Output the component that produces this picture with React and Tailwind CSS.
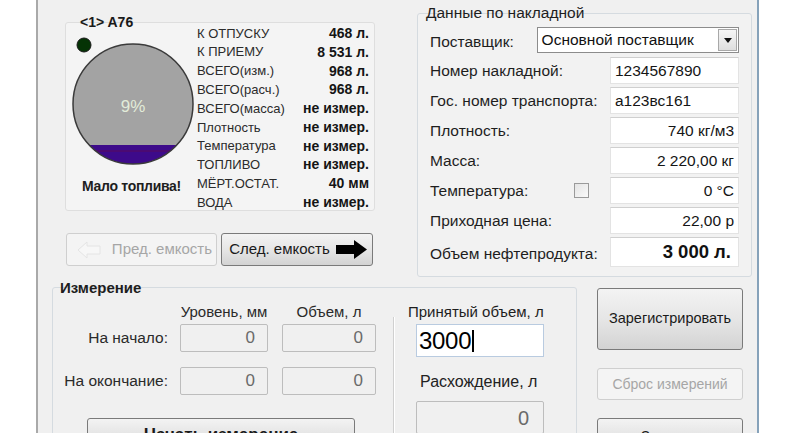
import React from 'react';

const font = { fontFamily: '"Liberation Sans", Arial, sans-serif' };

const tankRows = [
    ['К ОТПУСКУ', '468 л.'],
    ['К ПРИЕМУ', '8 531 л.'],
    ['ВСЕГО(изм.)', '968 л.'],
    ['ВСЕГО(расч.)', '968 л.'],
    ['ВСЕГО(масса)', 'не измер.'],
    ['Плотность', 'не измер.'],
    ['Температура', 'не измер.'],
    ['ТОПЛИВО', 'не измер.'],
    ['МЁРТ.ОСТАТ.', '40 мм'],
    ['ВОДА', 'не измер.'],
];

const invoiceRows = [
    { label: 'Номер накладной:', value: '1234567890', left: true },
    { label: 'Гос. номер транспорта:', value: 'а123вс161', left: true },
    { label: 'Плотность:', value: '740 кг/м3' },
    { label: 'Масса:', value: '2 220,00 кг' },
    { label: 'Температура:', value: '0 °C', check: true },
    { label: 'Приходная цена:', value: '22,00 р' },
];

function TankGauge() {
    return (
        <svg width="131" height="142" viewBox="0 0 131 142">
            <defs>
                <clipPath id="tankClip">
                    <circle cx="67" cy="81" r="60" />
                </clipPath>
            </defs>
            <circle cx="18" cy="22" r="7" fill="#053305" stroke="#1a1a1a" strokeWidth="1" />
            <circle cx="67" cy="81" r="60" fill="#a3a3a3" />
            <g clipPath="url(#tankClip)">
                <rect x="0" y="122" width="131" height="22" fill="#3d0a8a" />
                <line x1="0" y1="128" x2="131" y2="128" stroke="#5a0a5a" strokeWidth="1" />
            </g>
            <circle cx="67" cy="81" r="60" fill="none" stroke="#3a3a3a" strokeWidth="1.5" />
            <text x="67" y="89" textAnchor="middle" fontSize="17" fill="#e2ecd9" fontFamily="Liberation Sans, Arial, sans-serif">9%</text>
        </svg>
    );
}

function WinButton({ children, className = '', disabled }) {
    if (disabled) {
        return (
            <div className={`flex items-center justify-center rounded-[3px] border border-[#cfcfcf] bg-[#f4f4f4] text-[#a6a6a6] ${className}`}>
                {children}
            </div>
        );
    }
    return (
        <div className={`flex items-center justify-center rounded-[3px] border border-[#7a7a7a] bg-gradient-to-b from-[#f3f3f3] via-[#e6e6e6] to-[#d3d3d3] text-[#1a1a1a] ${className}`}>
            {children}
        </div>
    );
}

export default function App() {
    return (
        <div className="w-[800px] h-[433px] bg-white overflow-hidden flex" style={font}>
            <div className="w-[36px] shrink-0 bg-white"></div>
            <div className="w-[723px] h-[433px] shrink-0 bg-[#f0f0f0] border-l-2 border-l-[#a9a9a9] border-r-2 border-r-[#86a2ba] flex flex-col overflow-hidden">
                {/* top part */}
                <div className="flex h-[287px] shrink-0">
                    <div className="w-[379px] shrink-0 pl-[27px] pt-[22px] flex flex-col">
                        <div className="relative w-[310px] h-[189px] rounded-[3px] border border-[#dedede] bg-[#f4f4f4] flex">
                            <div className="absolute -top-[9px] left-[14px] text-[14px] font-bold text-[#1a1a1a] leading-[16px]">&lt;1&gt; A76</div>
                            <div className="w-[131px] shrink-0 flex flex-col">
                                <TankGauge />
                                <div className="mt-[13px] text-center text-[14px] font-bold text-[#1e1e1e] leading-[16px] tracking-[-0.3px]">Мало топлива!</div>
                            </div>
                            <div className="flex-1 pr-[5px] pt-[1px] flex flex-col">
                                {tankRows.map(([label, value]) => (
                                    <div key={label} className="h-[18.8px] flex items-center justify-between">
                                        <span className="text-[13px] text-[#2b2b2b]">{label}</span>
                                        <span className="text-[14px] font-bold text-[#151515]">{value}</span>
                                    </div>
                                ))}
                            </div>
                        </div>
                        <div className="mt-[22px] ml-[1px] flex gap-[4px]">
                            <WinButton disabled className="w-[151px] h-[33px] text-[15px] justify-end pr-[4px] gap-[6px]">
                                <svg width="24" height="18" viewBox="0 0 24 18" className="mr-auto ml-[10px]">
                                    <path d="M1 9 L10 1 L10 5 L23 5 L23 13 L10 13 L10 17 Z" fill="#f7f7f7" stroke="#e4e4e4" strokeWidth="1" />
                                </svg>
                                <span>Пред. емкость</span>
                            </WinButton>
                            <WinButton className="w-[152px] h-[33px] text-[15px] gap-[6px] pl-[2px]">
                                <span>След. емкость</span>
                                <svg width="31" height="19" viewBox="0 0 31 19">
                                    <path d="M0 5 L18 5 L18 0 L31 9.5 L18 19 L18 14 L0 14 Z" fill="#000" />
                                </svg>
                            </WinButton>
                        </div>
                    </div>
                    <div className="pt-[13px]">
                        <div className="relative w-[335px] h-[264px] rounded-[3px] border border-[#d5dbe0] bg-[#f2f2f2] px-[12px] pt-[13px] flex flex-col">
                            <div className="absolute -top-[10px] left-[8px] text-[15.5px] text-[#1e1e1e] leading-[18px]">Данные по накладной</div>
                            <div className="h-[26px] flex items-center">
                                <span className="w-[108px] text-[15.5px] text-[#1e1e1e] pt-[3px]">Поставщик:</span>
                                <div className="w-[205px] h-[26px] border border-[#8c8c8c] bg-white flex items-center">
                                    <span className="flex-1 pl-[4px] text-[15.5px] text-[#111]">Основной поставщик</span>
                                    <div className="w-[19px] h-[22px] mr-[1px] border border-[#a8a8a8] bg-gradient-to-b from-[#f6f6f6] to-[#dedede] flex items-center justify-center">
                                        <svg width="8" height="5" viewBox="0 0 8 5"><path d="M0 0 L8 0 L4 5 Z" fill="#111" /></svg>
                                    </div>
                                </div>
                            </div>
                            <div className="mt-[4px] flex flex-col gap-[3px]">
                                {invoiceRows.map((row) => (
                                    <div key={row.label} className="h-[27px] flex items-center">
                                        <span className="flex-1 whitespace-nowrap text-[15.5px] text-[#1e1e1e]">{row.label}</span>
                                        {row.check && (
                                            <div className="mr-[21px] w-[15px] h-[15px] border border-[#9a9a9a] bg-gradient-to-br from-[#e4e4e4] to-[#fafafa]"></div>
                                        )}
                                        <div className={`w-[129px] h-[27px] shrink-0 bg-white border border-[#e3e3e3] border-t-[#cfcfcf] flex items-center px-[4px] text-[15.5px] text-[#151515] ${row.left ? 'justify-start' : 'justify-end'}`}>
                                            {row.value}
                                        </div>
                                    </div>
                                ))}
                                <div className="h-[30px] flex items-center">
                                    <span className="flex-1 whitespace-nowrap text-[15.5px] text-[#1e1e1e] pt-[3px]">Объем нефтепродукта:</span>
                                    <div className="w-[129px] h-[30px] shrink-0 bg-white border border-[#e3e3e3] border-t-[#cfcfcf] flex items-center justify-end px-[7px] text-[18.5px] font-bold text-[#111]">
                                        3 000 л.
                                    </div>
                                </div>
                            </div>
                        </div>
                    </div>
                </div>

                {/* bottom part */}
                <div className="flex flex-1">
                    <div className="relative ml-[14px] w-[525px] h-[160px] rounded-[3px] border border-[#d5dbe0] flex">
                        <div className="absolute -top-[9px] left-[7px] text-[15px] font-bold text-[#1e1e1e] leading-[18px]">Измерение</div>
                        <div className="w-[340px] shrink-0 pt-[13px] flex flex-col">
                            <div className="h-[23px] flex items-center text-[15px] text-[#2a2a2a]">
                                <div className="w-[127px]"></div>
                                <div className="w-[88px] text-center">Уровень, мм</div>
                                <div className="w-[14px]"></div>
                                <div className="w-[94px] text-center">Объем, л</div>
                            </div>
                            <div className="flex flex-col gap-[15px]">
                                {['На начало:', 'На окончание:'].map((label) => (
                                    <div key={label} className="h-[28px] flex items-center">
                                        <div className="w-[115px] text-right text-[15.5px] text-[#2a2a2a]">{label}</div>
                                        <div className="ml-[12px] w-[88px] h-[28px] rounded-[2px] border border-[#bdbdbd] bg-[#f0f0f0] flex items-center justify-end pr-[12px] text-[17px] text-[#6a6a6a]">0</div>
                                        <div className="ml-[14px] w-[94px] h-[28px] rounded-[2px] border border-[#bdbdbd] bg-[#f0f0f0] flex items-center justify-end pr-[12px] text-[17px] text-[#6a6a6a]">0</div>
                                    </div>
                                ))}
                            </div>
                            <WinButton className="mt-[23px] ml-[34px] w-[268px] h-[32px] items-start pt-[3px] text-[17px] font-bold">
                                Начать измерение
                            </WinButton>
                        </div>
                        <div className="mt-[29px] w-[2px] border-l border-l-[#d0d0d0] border-r border-r-white"></div>
                        <div className="flex-1 pt-[13px] flex flex-col">
                            <div className="h-[23px] flex items-center pl-[13px] text-[15px] text-[#1e1e1e]">Принятый объем, л</div>
                            <div className="ml-[21px] w-[128px] h-[33px] bg-white border border-[#b9cbe0] flex items-center pl-[2px]">
                                <span className="text-[24px] text-black tracking-[-0.3px]">3000</span>
                                <div className="ml-[1px] w-[2px] h-[22px] bg-black"></div>
                            </div>
                            <div className="mt-[14px] h-[22px] flex items-center pl-[25px] text-[16px] text-[#222]">Расхождение, л</div>
                            <div className="mt-[8px] ml-[21px] w-[128px] h-[33px] rounded-[2px] border border-[#bdbdbd] bg-[#f0f0f0] flex items-center justify-end pr-[14px] text-[20px] text-[#6a6a6a]">0</div>
                        </div>
                    </div>
                    <div className="ml-[20px] pt-[1px] flex flex-col">
                        <WinButton className="w-[146px] h-[62px] text-[14.5px]">Зарегистрировать</WinButton>
                        <WinButton disabled className="mt-[18px] w-[146px] h-[32px] text-[14px]">Сброс измерений</WinButton>
                        <WinButton className="mt-[18px] w-[146px] h-[32px] text-[15px] items-start pt-[6px]">Закрыть</WinButton>
                    </div>
                </div>
            </div>
            <div className="flex-1 bg-white"></div>
        </div>
    );
}
